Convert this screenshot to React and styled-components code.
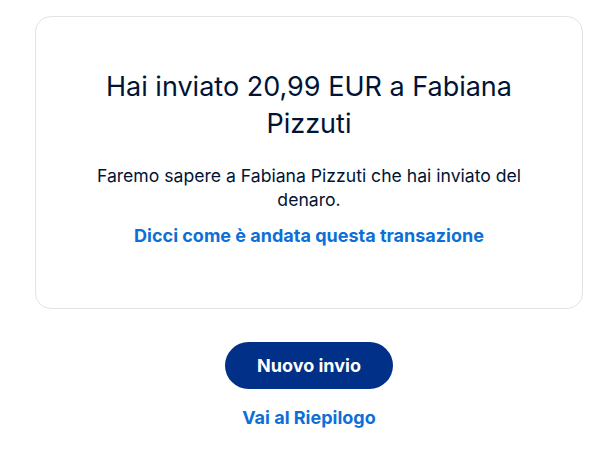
import React from "react";
import styled, { createGlobalStyle } from "styled-components";

const Global = createGlobalStyle`
  html, body { margin: 0; padding: 0; background: #fff; }
  body { font-family: Inter, "Helvetica Neue", Arial, sans-serif; -webkit-font-smoothing: antialiased; }
`;

const Page = styled.div`
  width: 596px;
  padding: 16px 13px 0 35px;
  box-sizing: border-box;
  display: flex;
  flex-direction: column;
  align-items: center;
`;

const Card = styled.div`
  width: 548px;
  height: 293px;
  box-sizing: border-box;
  border: 1px solid #e3e3e3;
  border-radius: 16px;
  display: flex;
  flex-direction: column;
  align-items: center;
  padding: 51px 40px 0;
  text-align: center;
`;

const Title = styled.h1`
  margin: 0;
  font-size: 27px;
  line-height: 37px;
  font-weight: 400;
  color: #001435;
  max-width: 440px;
`;

const Body = styled.p`
  margin: 22px 0 0;
  font-size: 17.6px;
  line-height: 24px;
  color: #001435;
  max-width: 450px;
`;

const Link = styled.a`
  display: block;
  margin-top: ${(p) => p.$mt || 0}px;
  font-size: 18px;
  line-height: 24px;
  font-weight: 700;
  color: #0d6fd6;
  text-decoration: none;
  cursor: pointer;
`;

const Actions = styled.div`
  display: flex;
  flex-direction: column;
  align-items: center;
  margin-top: 33px;
`;

const Button = styled.button`
  width: 168px;
  height: 47px;
  border: none;
  border-radius: 24px;
  background: #003087;
  color: #fff;
  font-family: inherit;
  font-size: 18px;
  font-weight: 700;
  cursor: pointer;
`;

export default function App() {
  return (
    <>
      <Global />
      <Page>
        <Card>
          <Title>Hai inviato 20,99 EUR a Fabiana Pizzuti</Title>
          <Body>Faremo sapere a Fabiana Pizzuti che hai inviato del denaro.</Body>
          <Link $mt={12}>Dicci come è andata questa transazione</Link>
        </Card>
        <Actions>
          <Button>Nuovo invio</Button>
          <Link $mt={17}>Vai al Riepilogo</Link>
        </Actions>
      </Page>
    </>
  );
}
